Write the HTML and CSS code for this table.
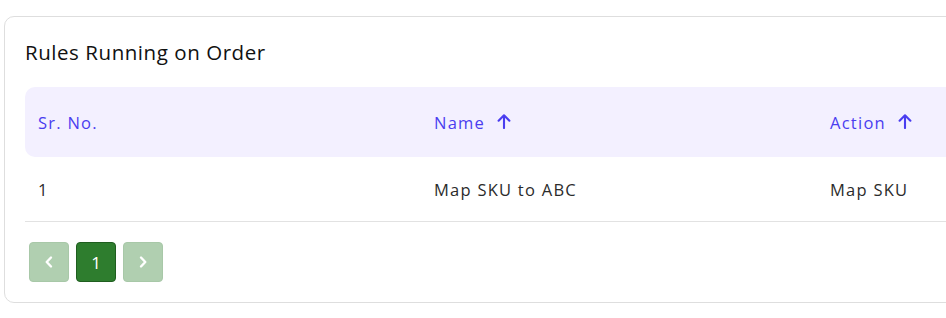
FILE: index.html
```html
<!DOCTYPE html>
<html lang="en">
<head>
<meta charset="utf-8">
<title>Rules Running on Order</title>
<link rel="stylesheet" href="styles.css">
</head>
<body>
<section class="card">
  <h2 class="card-title">Rules Running on Order</h2>
  <table class="rules">
    <thead>
      <tr>
        <th class="col">Sr. No.</th>
        <th class="col"><span class="sort">Name<svg class="arrow" viewBox="0 0 14 16" width="14" height="16"><path d="M7 15V2.5M1.6 7.7L7 2.3l5.4 5.4" fill="none" stroke="currentColor" stroke-width="2.1" stroke-linecap="round" stroke-linejoin="round"/></svg></span></th>
        <th class="col"><span class="sort">Action<svg class="arrow" viewBox="0 0 14 16" width="14" height="16"><path d="M7 15V2.5M1.6 7.7L7 2.3l5.4 5.4" fill="none" stroke="currentColor" stroke-width="2.1" stroke-linecap="round" stroke-linejoin="round"/></svg></span></th>
      </tr>
    </thead>
    <tbody>
      <tr>
        <td>1</td>
        <td>Map SKU to ABC</td>
        <td>Map SKU</td>
      </tr>
    </tbody>
  </table>
  <nav class="pager">
    <button class="page-btn disabled" aria-label="Previous"><svg viewBox="0 0 10 14" width="10" height="14"><path d="M7 2.5L2.7 7L7 11.5" fill="none" stroke="#fff" stroke-width="2.4" stroke-linecap="round" stroke-linejoin="round"/></svg></button>
    <button class="page-btn active">1</button>
    <button class="page-btn disabled" aria-label="Next"><svg viewBox="0 0 10 14" width="10" height="14"><path d="M3 2.5L7.3 7L3 11.5" fill="none" stroke="#fff" stroke-width="2.4" stroke-linecap="round" stroke-linejoin="round"/></svg></button>
  </nav>
</section>
</body>
</html>
```
FILE: styles.css
```css
html, body {
  margin: 0;
  padding: 0;
  overflow: hidden;
  background: #fff;
}
body {
  font-family: "Open Sans", "DejaVu Sans", sans-serif;
  color: #333;
}
.card {
  margin: 16px 0 0 4px;
  width: 1300px;
  border: 1px solid #dedede;
  border-radius: 10px;
  padding: 20px 0 20px 20px;
  box-sizing: border-box;
}
.card-title {
  margin: 0 0 20px 0;
  font-size: 20.5px;
  line-height: 30px;
  font-weight: 400;
  color: #111;
  letter-spacing: 0.55px;
}
.rules {
  border-collapse: separate;
  border-spacing: 0;
  width: 1188px;
  table-layout: fixed;
}
.rules th {
  background: #f3f0ff;
  color: #4a3df0;
  font-weight: 400;
  font-size: 16.5px;
  text-align: left;
  height: 70px;
  padding: 0 13px;
  width: 396px;
  box-sizing: border-box;
  letter-spacing: 1.25px;
}
.rules th:first-child {
  border-radius: 10px 0 0 10px;
}
.sort {
  display: inline-flex;
  align-items: center;
  gap: 12px;
}
.arrow {
  color: #4a3df0;
  margin-top: -2px;
}
.rules td {
  height: 65px;
  padding: 0 13px;
  font-size: 16.5px;
  border-bottom: 1px solid #e2e2e2;
  box-sizing: border-box;
  letter-spacing: 1.25px;
  color: #2b2b2b;
}
.pager {
  display: flex;
  gap: 7px;
  padding: 20px 0 0 4px;
}
.page-btn {
  width: 40px;
  height: 40px;
  border-radius: 4px;
  border: 1px solid transparent;
  display: flex;
  align-items: center;
  justify-content: center;
  font-family: "Open Sans", "DejaVu Sans", sans-serif;
  font-size: 17px;
  color: #fff;
  padding: 0;
}
.page-btn.disabled {
  background: #b0cfb0;
  border-color: #a8c8a8;
}
.page-btn.active {
  background: #2e7d2e;
  border-color: #1f5e1f;
}
```
